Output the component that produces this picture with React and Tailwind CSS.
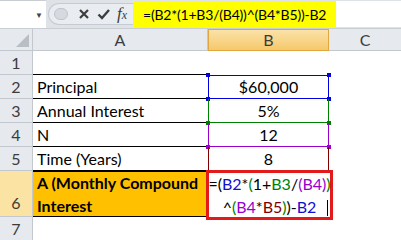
import React from 'react';

const font = { fontFamily: 'Lato, "Liberation Sans", sans-serif' };

// colour helpers for the edited formula in B6
const K = ({ c, children }) => <span className={c}>{children}</span>;

const Corner = ({ className }) => (
  <span className={`absolute w-[4px] h-[4px] ${className}`} />
);

export default function App() {
  const rowHead = "bg-[#e6e9ee] border-r border-b border-[#c3c8cf] flex items-center justify-center text-[16px] text-[#3c3c3c]";
  const cellA = "border-b border-black flex items-center pl-[4px] text-[16px] text-black";

  return (
    <div className="w-[401px] h-[240px] overflow-hidden bg-white" style={font}>
      {/* formula bar */}
      <div className="flex h-[29px] bg-[#dfe3e8] border-b border-[#c9ced5]">
        <div className="w-[46px] bg-white flex items-center justify-end pr-[3px] border-t border-[#c9ced5]">
          <span className="text-[8px] text-[#444]">▼</span>
        </div>
        <div className="w-[87px] flex items-center relative">
          <div className="absolute left-[2px] top-[3px] bottom-[3px] right-0 rounded-l-full bg-[#e9ecf0] border border-[#c6cbd2] border-r-0" />
          <div className="relative ml-[8px] w-[14px] h-[12px] rounded-full bg-[#d6dae0] border border-[#c0c5cc]" />
          <svg className="relative ml-[10px]" width="12" height="12" viewBox="0 0 12 12">
            <path d="M2 2 L10 10 M10 2 L2 10" stroke="#3d3d3d" strokeWidth="2.2" />
          </svg>
          <svg className="relative ml-[7px]" width="13" height="12" viewBox="0 0 13 12">
            <path d="M1.5 6.5 L5 10 L12 2" stroke="#3d3d3d" strokeWidth="2.4" fill="none" />
          </svg>
          <span className="relative ml-[7px] text-[17px] italic text-[#3d3d3d]" style={{ fontFamily: '"Liberation Serif", serif' }}>
            f<span className="text-[12px]">x</span>
          </span>
        </div>
        <div className="w-[203px] bg-[#ffff00] my-[1px] flex items-center pl-[10px] text-[14px] tracking-[-0.2px] text-black whitespace-nowrap overflow-hidden">
          =(B2*(1+B3/(B4))^(B4*B5))-B2
        </div>
        <div className="flex-1 bg-white my-[1px]" />
      </div>

      {/* sheet */}
      <div className="grid grid-cols-[33px_175px_121px_72px] grid-rows-[22px_24px_24px_24px_24px_24px_46px_24px]">
        {/* header row */}
        <div className="bg-[#e6e9ee] border-r border-b border-[#c3c8cf] relative">
          <svg className="absolute right-[3px] bottom-[3px]" width="13" height="13" viewBox="0 0 13 13">
            <path d="M13 0 L13 13 L0 13 Z" fill="#b9bec5" />
          </svg>
        </div>
        <div className="bg-[#e6e9ee] border-r border-b border-[#c3c8cf] flex items-center justify-center text-[16px] text-[#3c3c3c]">A</div>
        <div className="bg-gradient-to-b from-[#fbe2a8] to-[#f5c96a] border border-[#e2a640] flex items-center justify-center text-[16px] text-[#3c3c3c]">B</div>
        <div className="bg-[#e6e9ee] border-b border-[#c3c8cf] flex items-center justify-center text-[16px] text-[#3c3c3c]">C</div>

        {/* row 1 */}
        <div className={rowHead}>1</div>
        <div className={cellA} />
        <div />
        <div />

        {/* row 2 */}
        <div className={rowHead}>2</div>
        <div className={cellA}>Principal</div>
        <div className="relative border border-[#0000e0] flex items-center justify-center text-[16px]">
          $60,000
          <Corner className="bg-[#0000e0] -left-[3px] -top-[3px]" />
          <Corner className="bg-[#0000e0] -right-[3px] -top-[3px]" />
          <Corner className="bg-[#0000e0] -left-[3px] -bottom-[3px]" />
          <Corner className="bg-[#0000e0] -right-[3px] -bottom-[3px]" />
        </div>
        <div />

        {/* row 3 */}
        <div className={rowHead}>3</div>
        <div className={cellA}>Annual Interest</div>
        <div className="relative border-x border-b border-[#008000] flex items-center justify-center text-[16px]">
          5%
          <Corner className="bg-[#008000] -left-[3px] -bottom-[3px]" />
          <Corner className="bg-[#008000] -right-[3px] -bottom-[3px]" />
        </div>
        <div />

        {/* row 4 */}
        <div className={rowHead}>4</div>
        <div className={cellA}>N</div>
        <div className="relative border-x border-b border-[#9900cc] flex items-center justify-center text-[16px]">
          12
          <Corner className="bg-[#9900cc] -left-[3px] -bottom-[3px]" />
          <Corner className="bg-[#9900cc] -right-[3px] -bottom-[3px]" />
        </div>
        <div />

        {/* row 5 */}
        <div className={rowHead}>5</div>
        <div className={cellA}>Time (Years)</div>
        <div className="relative border-x border-[#800000] flex items-center justify-center text-[16px]">
          8
        </div>
        <div />

        {/* row 6 */}
        <div className="bg-[#fbe3a4] border-r border-b border-[#c3c8cf] flex items-end justify-center pb-[1px] text-[16px] text-[#3c3c3c]">6</div>
        <div className="bg-[#ffc000] border-y border-black flex flex-col justify-center pl-[4px] text-[16px] font-bold leading-[23px] text-black">
          <span>A (Monthly Compound</span>
          <span>Interest</span>
        </div>
        <div className="relative">
          <div className="absolute -left-[2px] -right-[4px] -top-[1px] -bottom-[3px] border-[3px] border-[#e21a1a] flex flex-col items-center justify-center text-[16px] leading-[23px] whitespace-nowrap">
            <span>
              =(<K c="text-[#1010d0]">B2</K>*<K c="text-[#008000]">(</K>1+<K c="text-[#008000]">B3</K>/<K c="text-[#9900cc]">(B4)</K><K c="text-[#008000]">)</K>
            </span>
            <span>
              ^<K c="text-[#008000]">(</K><K c="text-[#9900cc]">B4</K>*<K c="text-[#800000]">B5</K><K c="text-[#008000]">)</K>)-<K c="text-[#1010d0]">B2</K>
            </span>
            <span className="absolute right-[2px] bottom-[1px] w-[1px] h-[16px] bg-black" />
          </div>
        </div>
        <div />

        {/* row 7 */}
        <div className={rowHead}>7</div>
        <div />
        <div />
        <div />
      </div>
    </div>
  );
}
